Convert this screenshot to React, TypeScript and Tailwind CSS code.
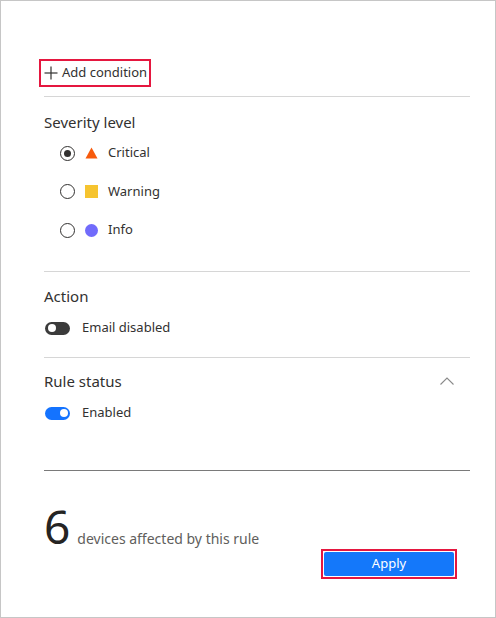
import React from 'react'

type Severity = {
  label: string
  icon: 'triangle' | 'square' | 'circle'
  checked?: boolean
}

const severities: Severity[] = [
  { label: 'Critical', icon: 'triangle', checked: true },
  { label: 'Warning', icon: 'square' },
  { label: 'Info', icon: 'circle' },
]

const SeverityIcon: React.FC<{ kind: Severity['icon'] }> = ({ kind }) => {
  if (kind === 'triangle') {
    return (
      <svg width="13" height="12" viewBox="0 0 13 12">
        <polygon points="6.5,0.5 12.5,11.5 0.5,11.5" fill="#f75a0c" />
      </svg>
    )
  }
  if (kind === 'square') {
    return <span className="block h-[13px] w-[13px] bg-[#f6c42f]" />
  }
  return <span className="block h-[13px] w-[13px] rounded-full bg-[#716bfb]" />
}

const Radio: React.FC<{ checked?: boolean }> = ({ checked }) => (
  <span className="flex h-[15px] w-[15px] items-center justify-center rounded-full border-[1.5px] border-[#323130]">
    {checked && <span className="block h-[7px] w-[7px] rounded-full bg-[#323130]" />}
  </span>
)

const Toggle: React.FC<{ on?: boolean }> = ({ on }) => (
  <span
    className={`flex h-[13px] w-[25px] items-center rounded-full px-[2.5px] ${
      on ? 'justify-end bg-[#1473ff]' : 'justify-start bg-[#3b3b3b]'
    }`}
  >
    <span className="block h-[8px] w-[8px] rounded-full bg-white" />
  </span>
)

export default function App() {
  return (
    <div
      className="flex h-[618px] w-[496px] flex-col border border-[#c6c6c6] bg-white pl-[43px] pr-[25px] pt-[58px] text-[#323130]"
      style={{ fontFamily: '"Noto Sans", "Open Sans", sans-serif' }}
    >
      {/* Add condition */}
      <div className="-ml-[5px] flex h-[28px] w-[112px] items-center gap-[4px] border-2 border-[#e5173f] pl-[3px] text-[13px]">
        <svg width="14" height="14" viewBox="0 0 14 14" stroke="#323130" strokeWidth="1.2">
          <line x1="7" y1="0.5" x2="7" y2="13.5" />
          <line x1="0.5" y1="7" x2="13.5" y2="7" />
        </svg>
        <span>Add condition</span>
      </div>
      <div className="mt-[9px] h-px bg-[#d6d6d6]" />

      {/* Severity */}
      <h3 className="mt-[15px] text-[15px] leading-[20px]">Severity level</h3>
      <div className="mt-[11px] flex flex-col gap-[18.5px] pl-[16px]">
        {severities.map((s) => (
          <div key={s.label} className="flex h-[20px] items-center text-[13px]">
            <Radio checked={s.checked} />
            <span className="ml-[10px] flex w-[13px] justify-center">
              <SeverityIcon kind={s.icon} />
            </span>
            <span className="ml-[10px]">{s.label}</span>
          </div>
        ))}
      </div>
      <div className="mt-[31px] h-px bg-[#d6d6d6]" />

      {/* Action */}
      <h3 className="mt-[14px] text-[15px] leading-[20px]">Action</h3>
      <div className="mt-[12px] flex h-[20px] items-center gap-[12px] pl-[1px] text-[13px]">
        <Toggle />
        <span>Email disabled</span>
      </div>
      <div className="mt-[19px] h-px bg-[#d6d6d6]" />

      {/* Rule status */}
      <div className="mt-[13px] flex items-center justify-between">
        <h3 className="text-[15px] leading-[20px]">Rule status</h3>
        <svg width="14" height="8" viewBox="0 0 14 8" fill="none" stroke="#8a8a8a" strokeWidth="1.1" className="mr-[16px]">
          <polyline points="0.5,7.5 7,1 13.5,7.5" />
        </svg>
      </div>
      <div className="mt-[12px] flex h-[20px] items-center gap-[12px] pl-[1px] text-[13px]">
        <Toggle on />
        <span>Enabled</span>
      </div>
      <div className="mt-[47px] h-px bg-[#7a7a7a]" />

      {/* Summary */}
      <div className="mt-[32px] flex items-baseline gap-[7px]">
        <span className="text-[46px] leading-none text-[#252423]">6</span>
        <span className="text-[14px] text-[#605e5c]">devices affected by this rule</span>
      </div>
      <div className="mr-[13px] flex justify-end">
        <div className="border-2 border-[#e5173f] p-px">
          <button className="flex h-[24px] w-[130px] items-center justify-center rounded-[2px] bg-[#1478fa] text-[13px] text-white">
            Apply
          </button>
        </div>
      </div>
    </div>
  )
}
